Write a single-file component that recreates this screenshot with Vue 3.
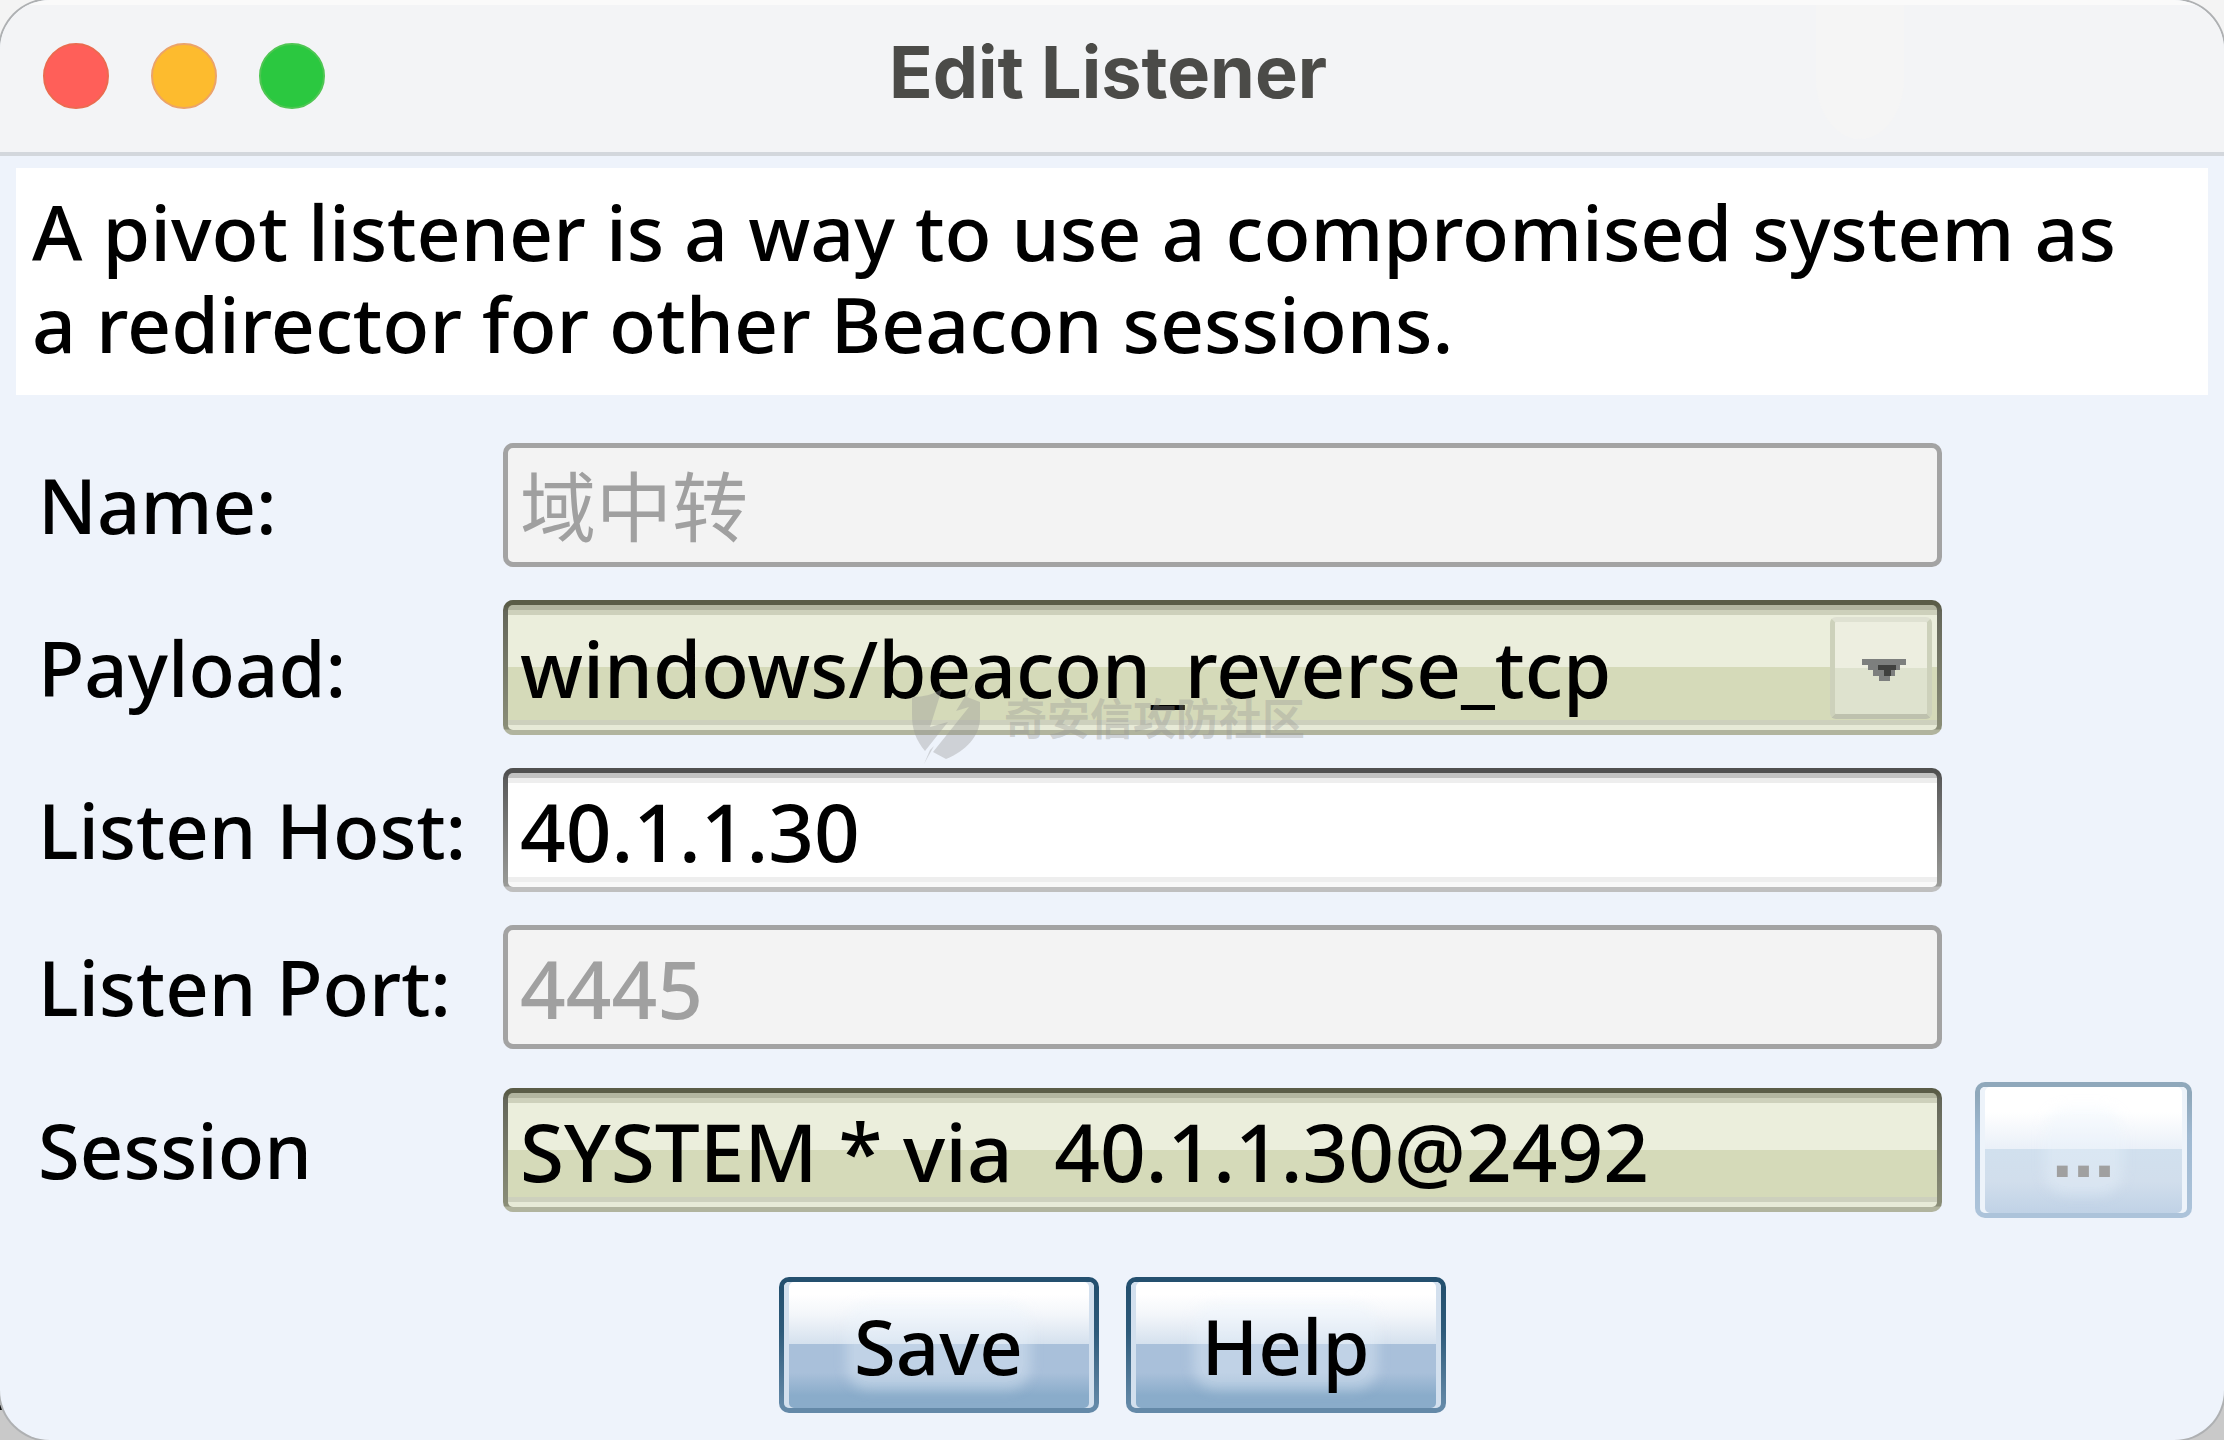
<script setup>
import { ref } from 'vue'

const name = ref('域中转')
const payload = ref('windows/beacon_reverse_tcp')
const host = ref('40.1.1.30')
const port = ref('4445')
const session = ref('SYSTEM * via  40.1.1.30@2492')
</script>

<template>
  <main class="window">
    <header class="titlebar">
      <div class="lights">
        <button class="light close" type="button" aria-label="Close"></button>
        <button class="light minimise" type="button" aria-label="Minimise"></button>
        <button class="light zoom" type="button" aria-label="Zoom"></button>
      </div>
      <h1 class="title">Edit Listener</h1>
      <span class="lights-balance"></span>
    </header>

    <p class="description">
      A pivot listener is a way to use a compromised system as a redirector for other Beacon sessions.
    </p>

    <form class="form" @submit.prevent>
      <div class="grid">
        <label class="label" for="name">Name:</label>
        <input id="name" v-model="name" class="field name" type="text" disabled />

        <label class="label row-start" for="payload">Payload:</label>
        <div class="combo">
          <select id="payload" v-model="payload" class="field olive tall">
            <option>windows/beacon_reverse_tcp</option>
          </select>
          <span class="arrow">
            <svg width="44" height="22" viewBox="0 0 44 22" aria-hidden="true">
              <path d="M0 0h44v6h-6v5h-5v6h-5v5H17v-5h-6v-6H6V6H0z" fill="#7d7f7e" />
              <path d="M16 6h18v5h-5v6h-7v-6h-6z" fill="#40413f" />
            </svg>
          </span>
          <div class="watermark" aria-hidden="true">
            <svg width="68" height="90" viewBox="0 0 68 90">
              <path d="M0 23C12 23 22 20 30 15L18 53 36 48 13 77C4 66 0 56 0 41z" />
              <path d="M62 8L55 23 68 28V44C68 62 54 77 34 85L21 78 57 33 44 37z" />
              <path d="M18 76L12 90 22 72z" />
            </svg>
            <span>奇安信攻防社区</span>
          </div>
        </div>

        <label class="label row-start" for="host">Listen Host:</label>
        <input id="host" v-model="host" class="field white" type="text" />

        <label class="label row-start" for="port">Listen Port:</label>
        <input id="port" v-model="port" class="field" type="text" disabled />

        <label class="label row-start" for="session">Session</label>
        <input id="session" v-model="session" class="field olive" type="text" readonly />
        <button class="button browse" type="button" disabled aria-label="Choose session">
          <span class="caption">...</span>
        </button>
      </div>

      <div class="actions">
        <button class="button" type="submit"><span class="caption">Save</span></button>
        <button class="button" type="button"><span class="caption">Help</span></button>
      </div>
    </form>
  </main>
</template>

<style>
html {
  background:
    linear-gradient(#111, #111) left bottom 30px / 6px 10px no-repeat,
    linear-gradient(#f4f4f4 50%, #c9c9c9 50%);
}

body {
  margin: 0;
}
</style>

<style scoped>
.window {
  box-sizing: border-box;
  min-height: 100vh;
  overflow: hidden;
  border-radius: 50px;
  background: #eef3fb;
  box-shadow: 0 0 0 2px #aeb0b2;
  color: #000;
  font-family: "Noto Sans", "Noto Sans CJK SC", sans-serif;
  font-size: 76px;
  font-weight: 500;
}

.titlebar {
  position: relative;
  display: flex;
  align-items: center;
  justify-content: space-between;
  height: 152px;
  padding: 0 43px;
  border-bottom: 4px solid #d3d7dc;
  background: linear-gradient(#fafafa 5px, #f3f4f6 5px);
}

.titlebar::after {
  content: "";
  position: absolute;
  top: 5px;
  right: 320px;
  width: 88px;
  height: 134px;
  border-radius: 0 0 44px 44px / 0 0 60px 60px;
  background: #f5f5f5;
}

.lights {
  display: flex;
  gap: 42px;
  width: 282px;
}

.lights-balance {
  width: 290px;
}

.light {
  width: 66px;
  height: 66px;
  padding: 0;
  border: 2px solid;
  border-radius: 50%;
}

.close {
  border-color: #ec6a50;
  background: #ff5f59;
}

.minimise {
  border-color: #eba36a;
  background: #fdbb2e;
}

.zoom {
  border-color: #4fc653;
  background: #2bc840;
}

.title {
  margin: 0 0 8px;
  color: #4b4b48;
  font-family: Inter, sans-serif;
  font-size: 72px;
  font-weight: 700;
  line-height: 88px;
}

.description {
  margin: 12px 16px 0;
  padding: 18px 60px 25px 16px;
  background: #fff;
  font-size: 77px;
  line-height: 92px;
}

.form {
  padding: 48px 32px 27px;
}

.grid {
  display: grid;
  grid-template-columns: 432px 1fr 217px;
  gap: 33px;
  align-items: center;
  padding-left: 6px;
}

.row-start {
  grid-column: 1;
}

.label {
  white-space: nowrap;
  line-height: 92px;
}

.field {
  box-sizing: border-box;
  width: 100%;
  height: 124px;
  margin: 0;
  padding: 0 12px;
  border: 5px solid #a3a3a3;
  border-radius: 10px;
  outline: 0;
  appearance: none;
  background: #f3f3f3;
  color: #000;
  font: inherit;
  font-size: 80px;
}

.field:disabled {
  color: #a0a0a0;
  opacity: 1;
}

.name {
  padding-bottom: 4px;
  font-size: 76px;
  font-weight: 400;
}

.tall {
  height: 135px;
  font-size: 78px;
}

.white {
  border-color: transparent;
  background:
    linear-gradient(#c2c2c2 5px, #eee 5px 10px, #fff 10px calc(100% - 10px), #eee calc(100% - 10px) calc(100% - 5px), #f8f8f8 calc(100% - 5px)) padding-box,
    linear-gradient(#505050 5px, #5c5c5c 12px, #9a9b98 calc(100% - 6px), #bfbfbf calc(100% - 5px)) border-box;
}

.olive {
  border-color: transparent;
  background:
    linear-gradient(#b2b5a0 5px, #cdd0bb 5px 10px, #ebeedc 10px 50%, #d5dab9 50% calc(100% - 10px), #cdd0bd calc(100% - 10px) calc(100% - 5px), #e7ead7 calc(100% - 5px)) padding-box,
    linear-gradient(#5a5c47 5px, #65675a 12px, #8b8e78 calc(100% - 6px), #b1b49e calc(100% - 5px)) border-box;
}

.combo {
  position: relative;
}

.arrow {
  position: absolute;
  top: 17px;
  right: 10px;
  display: flex;
  align-items: center;
  justify-content: center;
  box-sizing: border-box;
  width: 102px;
  height: 102px;
  padding: 4px 0 0 6px;
  border: 5px solid;
  border-color: #dfe1d2 #cdd1bb #bec1ae #cdd1bb;
  border-radius: 6px;
  background: linear-gradient(#edeee0 50%, #dee2ce 50%);
  pointer-events: none;
}

.watermark {
  position: absolute;
  top: 74px;
  left: 409px;
  display: flex;
  align-items: center;
  gap: 24px;
  color: rgba(150, 150, 150, 0.36);
  font-family: "Noto Sans CJK SC", sans-serif;
  font-size: 43px;
  font-weight: 700;
  line-height: 80px;
  white-space: nowrap;
  pointer-events: none;
}

.watermark span {
  padding-bottom: 6px;
}

.watermark path {
  fill: currentColor;
}

.button {
  box-sizing: border-box;
  width: 320px;
  height: 136px;
  padding: 0;
  border: 5px solid transparent;
  border-radius: 10px;
  background:
    linear-gradient(#fff 10%, #f3f6fa 26%, #d5e1ee 49%, #a9c0da 49%, #a9c0da 72%, #8aacca 90%) padding-box,
    linear-gradient(#24506f 10%, #2d5a7a 40%, #6489a8 95%) border-box;
  box-shadow: inset 5px 0 #d3e0ee, inset -5px 0 #d3e0ee;
  color: #000;
  font: inherit;
}

.caption {
  display: inline-block;
  border-radius: 16px;
  background: rgba(235, 243, 252, 0.35);
  box-shadow: 0 0 12px 8px rgba(235, 243, 252, 0.35);
  line-height: 72px;
}

.browse {
  width: 217px;
  background:
    linear-gradient(#fff 20%, #eaf0f8 49%, #d1e0ee 49%, #d1deec 75%, #c0d2e6) padding-box,
    linear-gradient(#8fa8bb 10%, #9fb9d2 40%, #acc3da 95%) border-box;
  box-shadow: inset 5px 0 #edf3fa, inset -5px 0 #edf3fa;
  color: #a0a0a0;
  font-family: "Liberation Sans", sans-serif;
  font-size: 76px;
  font-weight: 700;
}

.actions {
  display: flex;
  justify-content: center;
  gap: 27px;
  margin-top: 59px;
}
</style>
